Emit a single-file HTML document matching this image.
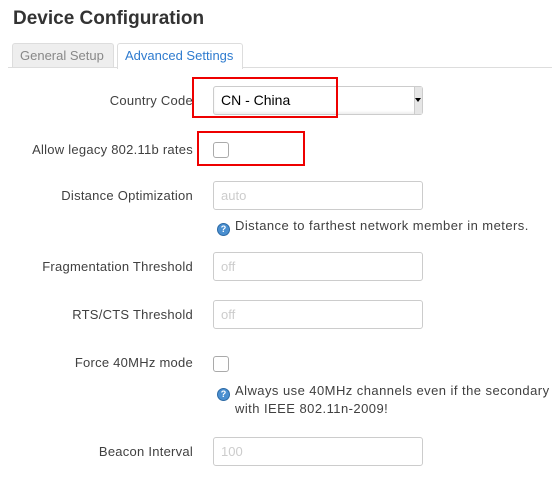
<!DOCTYPE html>
<html><head><meta charset="utf-8"><style>
*{box-sizing:border-box}
body{margin:0;width:552px;height:486px;overflow:hidden;background:#fff;font-family:"Liberation Sans",sans-serif;color:#404040;position:relative}
h1{position:absolute;left:13px;top:8px;margin:0;font-size:19px;font-weight:bold;color:#333}
.tab{position:absolute;top:43px;height:25px;font-size:13px;line-height:24px;padding:0 7px;border:1px solid #ddd;border-bottom:none;border-radius:3px 3px 0 0}
.line{position:absolute;left:8px;right:0;top:67px;border-top:1px solid #ddd}
.lbl{position:absolute;right:359px;font-size:13px;color:#404040;white-space:nowrap;letter-spacing:0.25px}
.inp{position:absolute;left:213px;width:210px;height:29px;border:1px solid #ccc;border-radius:3px;font-size:13px;color:#ccc;padding:6px 7px}
.cb{position:absolute;left:213px;width:16px;height:16px;border:1px solid #aaa;border-radius:3px}
.help{position:absolute;left:217px;font-size:13px;color:#404040;white-space:nowrap;letter-spacing:0.45px}
.q{display:inline-block;width:13px;height:13px;border-radius:50%;background:#4a8fd0;border:1px solid #2d6aa5;color:#fff;font-size:9px;line-height:11px;text-align:center;font-weight:bold;vertical-align:-2px;margin-right:5px;letter-spacing:0}
.red{position:absolute;border:2px solid #e00}
</style></head><body>
<h1>Device Configuration</h1>
<div class="tab" style="left:12px;width:102px;background:#eee;color:#888">General Setup</div>
<div class="tab" style="left:117px;width:126px;background:#fff;color:#2e7bcf;height:26px;z-index:2">Advanced Settings</div>
<div class="line"></div>

<div class="lbl" style="top:93px">Country Code</div>
<div class="inp" style="top:86px;height:29px;color:#000;border-color:#ccc;box-shadow:inset 0 -2px 2px #eee;font-size:14px;padding-top:5px">CN - China<span style="position:absolute;right:0;top:0;width:8px;height:27px;background:#e6e6e6;border-left:1px solid #ccc"></span><span style="position:absolute;right:1px;top:11px;border:3px solid transparent;border-top:4px solid #000"></span></div>
<div class="red" style="left:192px;top:77px;width:146px;height:41px"></div>

<div class="lbl" style="top:142px">Allow legacy 802.11b rates</div>
<div class="cb" style="top:142px"></div>
<div class="red" style="left:197px;top:131px;width:108px;height:35px"></div>

<div class="lbl" style="top:188px">Distance Optimization</div>
<div class="inp" style="top:181px">auto</div>
<div class="help" style="top:218px"><span class="q">?</span>Distance to farthest network member in meters.</div>

<div class="lbl" style="top:259px">Fragmentation Threshold</div>
<div class="inp" style="top:252px">off</div>

<div class="lbl" style="top:307px">RTS/CTS Threshold</div>
<div class="inp" style="top:300px">off</div>

<div class="lbl" style="top:355px">Force 40MHz mode</div>
<div class="cb" style="top:356px"></div>
<div class="help" style="top:383px"><span class="q">?</span>Always use 40MHz channels even if the secondary ch</div>
<div class="help" style="top:401px;left:235px">with IEEE 802.11n-2009!</div>

<div class="lbl" style="top:444px">Beacon Interval</div>
<div class="inp" style="top:437px">100</div>
</body></html>
